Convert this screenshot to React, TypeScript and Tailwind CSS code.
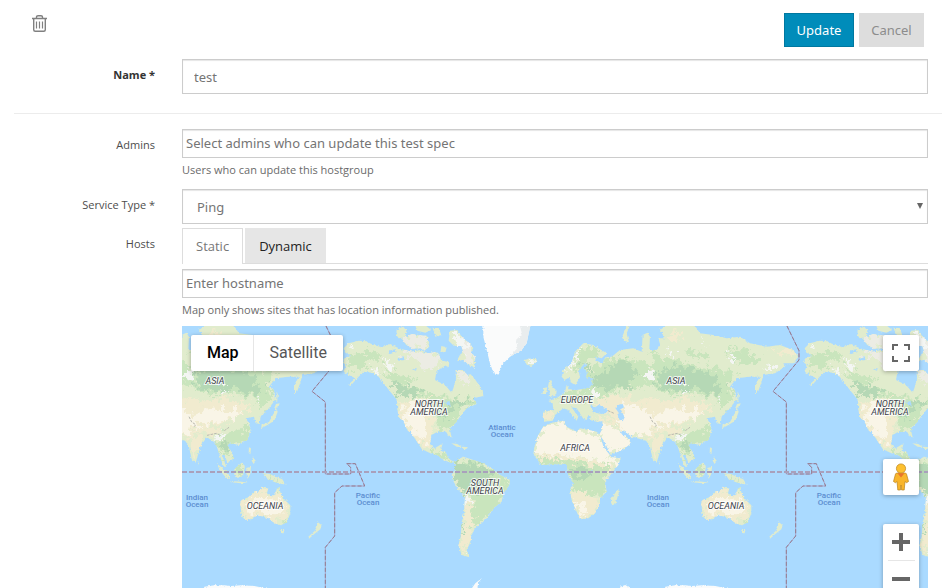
import { useLayoutEffect, useRef, useState, type ReactNode } from "react";

const WORLD_WIDTH = 461;

const LAND = [
  // North and Central America
  "M485 85L500 70L530 62L552 64L575 75L600 82L625 72L650 85L690 95L714 90L740 100L765 95L775 115L790 125L789 138L764 152L759 180L789 195L809 218L814 205L822 180L821 150L844 150L856 165L866 163L879 178L902 212L904 228L874 235L884 252L854 265L834 290L824 305L804 325L806 340L809 352L801 350L792 335L764 337L748 345L744 372L758 385L774 375L782 370L776 392L792 398L798 415L814 425L810 430L785 420L765 405L745 400L720 388L708 370L695 350L685 332L678 334L665 305L650 290L645 260L645 240L625 215L605 190L590 170L570 158L545 155L530 170L505 198L499 194L520 175L500 165L485 155L492 135L480 125L490 112L510 108L490 98Z",
  // South America
  "M814 425L844 410L874 420L904 430L929 445L954 465L984 480L982 495L964 520L959 545L934 565L919 590L899 610L879 625L869 645L864 670L854 690L862 712L839 705L829 675L836 650L839 610L847 570L849 530L829 510L812 480L809 465L819 450L819 435Z",
  // Africa
  "M1084 320L1109 308L1144 302L1154 320L1184 335L1194 325L1244 335L1254 345L1264 380L1279 400L1289 412L1316 415L1309 435L1269 485L1274 515L1254 535L1254 550L1239 580L1219 595L1194 598L1184 575L1169 540L1164 510L1174 490L1159 465L1154 435L1114 432L1079 435L1059 410L1054 400L1059 375L1069 345Z",
  "M1300 518L1309 506L1310 520L1300 553L1289 556L1286 538Z",
  // Eurasia
  "M1086 305L1084 275L1114 270L1112 250L1099 243L1124 235L1149 215L1154 195L1162 208L1184 210L1214 205L1234 195L1228 184L1240 176L1212 172L1216 158L1208 145L1216 132L1206 130L1190 152L1194 172L1180 195L1168 188L1162 172L1148 180L1139 170L1144 150L1169 130L1179 95L1204 70L1234 75L1274 100L1259 115L1244 110L1240 122L1262 128L1270 112L1289 110L1314 90L1354 85L1379 95L1382 45L1396 38L1404 50L1402 90L1424 90L1434 72L1429 55L1450 55L1434 30L1464 10L1534 10L1554 40L1594 45L1634 55L1674 50L1704 70L1754 80L1794 75L1834 90L1849 110L1834 130L1804 130L1809 140L1779 160L1744 165L1739 185L1729 213L1719 220L1719 195L1734 170L1704 170L1664 175L1644 200L1659 210L1662 240L1644 265L1629 275L1619 290L1616 312L1604 310L1599 290L1574 295L1584 310L1589 330L1579 360L1554 375L1529 370L1519 375L1534 400L1539 415L1519 428L1511 405L1503 405L1516 440L1508 440L1494 400L1484 370L1458 352L1440 375L1424 428L1412 418L1403 376L1392 362L1350 350L1322 330L1316 335L1334 350L1349 368L1324 388L1286 405L1268 365L1252 344L1259 330L1262 303L1244 305L1224 300L1226 290L1219 285L1214 300L1204 296L1184 265L1169 262L1189 290L1184 302L1159 270L1144 265L1119 285L1112 302Z",
  // Britain and Ireland
  "M1102 180L1110 182L1108 196L1124 212L1122 226L1100 232L1104 215L1098 200Z M1086 204L1096 202L1092 222L1081 222Z",
  // Iceland
  "M1028 120L1040 116L1062 114L1066 126L1048 138L1034 134Z",
  // Canadian Arctic islands
  "M644 28L664 20L676 35L668 52L650 55L643 45Z M660 55L690 42L710 45L735 48L742 70L725 85L695 86L672 74Z M714 60L730 55L742 80L728 92L716 85Z M698 12L725 12L748 30L730 38L706 32Z M752 24L770 24L778 45L760 50Z M778 78L794 82L790 98L776 94Z",
  "M804 32L826 30L840 52L862 70L874 84L867 96L880 112L878 144L862 136L844 120L824 124L834 104L844 96L838 78L816 78L800 62Z M788 124L802 126L800 142L788 136Z",
  // Novaya Zemlya
  "M1326 62L1320 52L1334 18L1344 16L1334 40L1340 66Z",
  // Japan
  "M1665 252L1676 250L1672 262L1660 264Z M1664 262L1670 275L1660 302L1634 318L1620 325L1622 315L1644 306L1656 284Z M1667 215L1671 222L1668 248L1664 240Z",
  // Taiwan and the Philippines
  "M1584 382L1590 385L1588 403L1583 398Z M1596 412L1604 422L1598 432L1592 422Z",
  // Indonesia
  "M1488 432L1500 440L1528 468L1526 478L1514 472L1496 450Z M1540 448L1562 428L1572 438L1566 468L1550 474L1540 464Z M1576 444L1590 440L1588 462L1580 476L1576 462Z M1528 483L1562 485L1580 488L1560 490L1530 487Z",
  "M1624 458L1646 462L1668 472L1684 478L1694 494L1674 490L1660 486L1644 478L1630 468Z",
  // Australia and New Zealand
  "M1558 550L1562 540L1582 532L1600 514L1612 516L1624 502L1642 506L1638 520L1654 530L1664 516L1670 500L1676 508L1680 524L1692 540L1708 556L1708 580L1698 606L1680 616L1660 610L1642 594L1610 586L1588 598L1572 600L1562 588Z",
  "M1678 630L1690 630L1688 640L1680 640Z M1790 606L1802 616L1798 628L1780 642L1764 656L1762 650L1780 634L1786 624Z",
  // Caribbean
  "M808 370L826 372L840 382L824 380Z M842 380L858 382L852 388L842 386Z",
  // Sri Lanka
  "M1428 424L1434 430L1430 436Z",
];

const PALE = [
  "M1066 345L1084 322L1144 304L1184 338L1244 338L1262 380L1286 412L1316 416L1290 440L1264 425L1200 412L1130 408L1056 400Z",
  "M1252 344L1268 365L1286 405L1352 368L1322 332L1300 325L1262 305Z",
  "M1320 256L1370 258L1400 282L1436 304L1402 345L1350 350L1322 330L1310 310Z",
  "M1400 290L1450 268L1510 270L1550 270L1570 268L1550 290L1510 306L1440 312Z",
  "M670 256L704 250L720 290L732 330L734 370L712 360L686 332L660 290Z",
  "M1574 550L1610 530L1660 540L1690 566L1670 586L1640 584L1610 578L1580 582Z",
  "M1176 545L1204 542L1214 566L1200 590L1186 572Z",
];

const SAND = [
  "M1250 238L1300 226L1340 234L1400 250L1384 232L1450 244L1500 232L1560 246L1594 252L1570 280L1510 312L1440 322L1400 312L1360 340L1310 330L1290 286L1240 264Z",
  "M1380 300L1440 322L1510 326L1470 344L1420 330L1402 360L1376 344Z",
  "M1086 274L1114 272L1114 296L1088 302Z M1226 288L1300 300L1290 318L1262 304Z",
  "M1062 402L1150 410L1200 414L1270 430L1250 440L1180 424L1068 414Z",
  "M1166 512L1210 516L1250 540L1252 560L1230 586L1200 598L1184 580L1170 542Z",
  "M850 530L866 540L870 610L872 640L854 690L842 684L842 640L846 600Z M812 480L840 508L846 530L828 512Z",
  "M656 246L700 240L740 236L752 290L756 330L744 384L712 374L676 340L648 290Z",
  "M1406 346L1436 346L1446 360L1420 412L1408 390Z",
  "M1556 540L1600 516L1640 500L1640 522L1664 520L1676 520L1706 562L1700 596L1664 604L1610 590L1572 602Z",
  "M1460 40L1490 30L1500 60L1474 70Z M1760 88L1830 90L1846 110L1804 102Z M1274 480L1296 440L1310 420L1280 430Z",
];

const GREEN = [
  "M620 168L680 196L740 220L790 232L830 236L874 236L884 252L840 270L806 322L770 332L756 280L740 236L690 220L650 216Z",
  "M500 110L560 90L600 104L590 126L560 122L540 146L500 146Z M600 150L640 160L700 176L690 190L640 184Z",
  "M1206 168L1224 150L1290 112L1340 116L1400 130L1420 190L1350 206L1310 210L1250 236L1200 240L1160 250L1120 246L1150 216L1200 208Z",
  "M1410 106L1470 118L1540 136L1600 146L1660 164L1640 200L1656 240L1614 280L1600 230L1540 224L1470 226L1420 200Z",
  "M1480 350L1540 330L1588 318L1586 346L1560 372L1528 376L1536 412L1516 400L1500 408L1488 380Z",
  "M1060 412L1150 418L1250 428L1296 420L1270 470L1268 530L1240 520L1180 512L1166 480L1154 440L1080 436Z",
  "M820 430L880 420L984 482L960 540L926 580L900 606L874 622L866 570L880 540L850 530L818 492Z",
  "M1200 80L1230 80L1250 100L1220 120L1190 144L1170 160Z",
  "M1660 80L1700 100L1740 116L1720 136L1660 130L1630 100Z M1400 100L1420 60L1424 100Z M1520 90L1570 104L1560 120L1510 104Z",
  "M1290 270L1310 274L1300 290Z M724 384L750 392L790 400L812 430L770 410Z",
  "M1690 590L1704 580L1700 606L1682 614Z M1490 436L1526 474L1500 454Z M1546 436L1566 430L1562 468L1544 462Z M1630 462L1690 488L1660 484Z M1624 502L1638 510L1610 518Z M1670 500L1690 540L1672 524Z",
];

const FOREST = [
  "M1224 186L1246 160L1280 150L1300 128L1330 118L1352 138L1372 150L1370 166L1346 180L1350 206L1330 210L1310 198L1280 208L1250 204L1228 198Z",
  "M1424 164L1470 138L1520 144L1560 156L1610 172L1604 190L1630 214L1600 226L1560 214L1530 196L1490 220L1440 204L1420 192Z",
  "M628 186L690 200L720 220L700 236L660 220L646 232Z",
  "M796 240L830 236L868 240L846 258L816 262L790 300L776 282L806 256Z",
  "M826 430L900 432L930 462L920 500L880 512L850 524L824 500L812 470Z",
  "M1160 442L1210 440L1234 458L1220 476L1176 474Z",
  "M1200 130L1226 134L1220 150L1200 150Z M1500 360L1526 366L1528 384L1506 396Z",
  "M838 622L846 622L844 646L838 658Z M1668 174L1644 196L1656 206L1640 190Z",
];

const TUNDRA = [
  "M714 92L764 100L774 118L760 154L730 146L700 118L660 106L690 96Z",
  "M650 56L700 44L740 50L738 80L690 84Z M804 34L840 52L874 84L880 140L850 120L836 80Z",
  "M824 150L850 160L870 180L850 190L830 180Z",
];

const SNOW = [
  "M600 120L630 126L638 148L616 142Z M1146 160L1184 96L1204 74L1186 110L1166 150Z",
  "M1380 158L1410 150L1424 164L1396 176Z M1640 96L1664 114L1656 124L1636 112Z M1740 146L1780 134L1790 140L1760 154Z",
  "M1220 216L1240 208L1250 230L1230 238Z M1500 208L1518 212L1530 200L1532 214L1508 224Z",
  "M838 530L864 538L856 560L848 560Z M1040 118L1060 118L1056 130L1040 132Z M830 676L838 696L850 710L834 702Z",
  "M806 34L824 36L850 72L862 88L852 96L842 84L820 60Z M500 76L520 72L510 84Z M560 140L590 148L600 164L580 156Z",
  "M1450 96L1474 92L1480 104L1460 106Z M1560 60L1576 66L1570 80Z M1604 230L1620 240L1610 250Z M1476 352L1500 344L1510 352L1490 358Z",
];

const ICE = [
  "M904 10L1046 10L1040 40L1034 70L1019 90L984 110L959 135L950 164L934 158L924 130L914 90L904 50Z",
  "M1450 800L1480 796L1510 796L1530 798L1560 796L1600 798L1640 806L1640 840L1440 840Z M866 810L880 790L900 774L890 786L880 830Z M1314 800L1330 795L1344 804L1340 830L1320 830Z",
];

const WATER = [
  "M1228 256L1240 262L1250 254L1274 266L1276 278L1258 282L1232 276Z",
  "M1306 256L1322 252L1326 262L1316 268L1328 292L1322 304L1308 296L1310 278L1300 264Z",
  "M620 92L640 88L644 96L624 102Z M646 118L664 112L668 120L650 122Z M690 148L704 144L702 152Z",
  "M784 246L802 244L806 258L794 252Z M1312 332L1330 344L1324 348Z",
  "M1490 192L1508 178L1510 184L1492 198Z M1226 452L1232 450L1234 460L1228 460Z",
];

const DATELINE =
  "M432 18L468 92V120L390 214L430 246V462H506V442L494 431H520L548 498H480L458 518V648L430 682V860";

const RANGES = "M1404 290L1412 306L1424 314L1420 320M1458 346L1486 340L1498 346M1510 332L1524 322M1278 272L1296 280";

function Shapes({ paths, fill }: { paths: string[]; fill: string }) {
  return (
    <g fill={fill}>
      {paths.map((d) => (
        <path key={d} d={d} />
      ))}
    </g>
  );
}

function World() {
  return (
    <>
      <g filter="url(#coast)">
        <Shapes paths={LAND} fill="#e1eccd" />
        <g clipPath="url(#land)">
          <g filter="url(#terrain)">
            <Shapes paths={GREEN} fill="#c9e5bd" />
            <Shapes paths={SAND} fill="#f1ebcf" />
            <Shapes paths={PALE} fill="#f9f5e7" />
            <Shapes paths={FOREST} fill="#b5d8b5" />
            <Shapes paths={TUNDRA} fill="#ecece4" />
            <Shapes paths={SNOW} fill="#f4f6f3" />
          </g>
        </g>
        <Shapes paths={ICE} fill="#fafbfb" />
        <path d="M1014 18H1046L1040 40L1034 70L1019 90L984 110L1006 84L1002 60L1020 42Z" fill="#e9edee" />
        <Shapes paths={WATER} fill="#aadaff" />
      </g>
      <path d={RANGES} fill="none" stroke="#b9b9b0" strokeWidth="3" strokeDasharray="8 3" />
      <path d={DATELINE} fill="none" stroke="#a8a4cc" strokeWidth="3" />
      <path d={DATELINE} fill="none" stroke="#957c8f" strokeWidth="3" strokeDasharray="12 6" />
    </>
  );
}

type Place = { lines: string[]; x: number; y: number; ocean?: boolean };

const PLACES: Place[] = [
  { lines: ["ASIA"], x: 494, y: 58 },
  { lines: ["NORTH", "AMERICA"], x: 247, y: 81 },
  { lines: ["EUROPE"], x: 395, y: 77 },
  { lines: ["AFRICA"], x: 393, y: 125 },
  { lines: ["SOUTH", "AMERICA"], x: 303, y: 160 },
  { lines: ["OCEANIA"], x: 544, y: 183 },
  { lines: ["Atlantic", "Ocean"], x: 320, y: 104, ocean: true },
  { lines: ["Pacific", "Ocean"], x: 186, y: 172, ocean: true },
  { lines: ["Indian", "Ocean"], x: 476, y: 174, ocean: true },
];

function PlaceLabel({ place, offset }: { place: Place; offset: number }) {
  return (
    <text
      textAnchor="middle"
      className={
        place.ocean
          ? "fill-[#5b8dd0] text-[8px] font-medium"
          : "fill-[#40424a] stroke-[#ffffffcc] stroke-2 text-[9px] italic [paint-order:stroke]"
      }
    >
      {place.lines.map((line, i) => (
        <tspan key={line} x={place.x + offset} y={place.y + i * (place.ocean ? 7 : 8)}>
          {line}
        </tspan>
      ))}
    </text>
  );
}

function WorldMap() {
  const ref = useRef<SVGSVGElement>(null);
  const [width, setWidth] = useState(0);

  useLayoutEffect(() => {
    const svg = ref.current;
    if (!svg) return;
    const measure = () => setWidth(svg.getBoundingClientRect().width);
    measure();
    const observer = new ResizeObserver(measure);
    observer.observe(svg);
    return () => observer.disconnect();
  }, []);

  // The world repeats sideways until the map's whole width is covered.
  const offsets: number[] = [];
  for (let x = -WORLD_WIDTH; x < width - 130; x += WORLD_WIDTH) offsets.push(x);

  return (
    <svg ref={ref} className="block h-full w-full font-['Roboto',sans-serif]" role="img" aria-label="World map">
      <defs>
        <filter id="coast" x="-2%" y="-2%" width="104%" height="104%">
          <feTurbulence type="fractalNoise" baseFrequency="0.16" numOctaves="3" seed="4" result="noise" />
          <feDisplacementMap in="SourceGraphic" in2="noise" scale="9" xChannelSelector="R" yChannelSelector="G" />
        </filter>
        <filter id="terrain" x="-2%" y="-2%" width="104%" height="104%">
          <feTurbulence type="fractalNoise" baseFrequency="0.06" numOctaves="4" seed="9" result="noise" />
          <feDisplacementMap in="SourceGraphic" in2="noise" scale="55" xChannelSelector="R" yChannelSelector="G" />
        </filter>
        <clipPath id="land">
          {LAND.map((d) => (
            <path key={d} d={d} />
          ))}
        </clipPath>
      </defs>
      {offsets.map((offset) => (
        <g key={offset} transform={`translate(${offset} -6) scale(0.33333)`}>
          <World />
        </g>
      ))}
      <line x1="0" x2="100%" y1="146" y2="146" stroke="#a9a0bc" strokeWidth="2" strokeDasharray="5 2" />
      {offsets.flatMap((offset) =>
        PLACES.filter((p) => p.x + offset > 0 && p.x + offset < width).map((p) => (
          <PlaceLabel key={`${p.lines[0]} ${offset}`} place={p} offset={offset} />
        )),
      )}
    </svg>
  );
}

function Pegman() {
  return (
    <svg viewBox="0 0 18 28" className="h-7 w-[18px]" aria-hidden="true">
      <g stroke="#b9821c" strokeWidth="0.7">
        <path
          d="M4.500 10h9l1 1 2 7.500-2 1.200-1.500-1.200-.8 8.500H9.600L9 22l-.6 5H5.800L5 18.500l-1.500 1.200-2-1.200 2-7.500z"
          fill="#f9b52b"
        />
        <circle cx="9" cy="5.500" r="4.600" fill="#fdc02f" />
      </g>
      <path d="M5.500 10.200h7L9 14.500z" fill="#e8742c" />
    </svg>
  );
}

function Row({ label, htmlFor, bold, children }: { label: string; htmlFor: string; bold?: boolean; children: ReactNode }) {
  return (
    <div className="flex pr-5">
      <label
        htmlFor={htmlFor}
        className={`mr-[27px] w-[155px] shrink-0 pt-2 text-right text-[11px] leading-4 ${bold ? "font-bold text-[#333]" : "text-[#4d4d4d]"}`}
      >
        {label}
      </label>
      <div className="min-w-0 flex-1">{children}</div>
    </div>
  );
}

const control = "font-['Noto_Sans',sans-serif]";
const field =
  "block w-full border border-[#ccc] bg-white text-[#757575] shadow-[inset_0_1px_1px_rgba(0,0,0,0.1)] outline-none placeholder:text-[#757575] placeholder:opacity-100";
const picker = "h-[29px] px-[3px] pb-[2px]";
const mapButton = "flex w-9 items-center justify-center rounded-xs bg-white shadow-[0_1px_4px_rgba(0,0,0,0.3)]";

export default function App() {
  const [name, setName] = useState("test");
  return (
    <div className="h-screen overflow-hidden bg-white font-['Open_Sans','Noto_Sans',sans-serif] text-[13px]">
      <header className="flex items-start justify-between pt-[13px] pr-6 pl-8">
        <button type="button" aria-label="Delete" className="mt-[2px] text-[#808080]">
          <svg viewBox="0 0 15 17" className="h-[17px] w-[15px]" fill="none" stroke="currentColor" aria-hidden="true">
            <path d="M0 3.500h15M4.500 3V2q0-1.300 1.500-1.300h3q1.500 0 1.500 1.300v1M1.700 4v10.700q0 1.500 1.500 1.500h8.600q1.500 0 1.500-1.500V4" strokeWidth="1.400" />
            <path d="M4.500 6.500v7M7.500 6.500v7M10.500 6.500v7" strokeWidth="1.200" />
          </svg>
        </button>
        <div className="flex gap-[5px]">
          <button type="button" className={`${control} h-[34px] w-[70px] bg-[#008cba] pt-px text-white inset-ring inset-ring-[#0078a0]`}>
            Update
          </button>
          <button type="button" className={`${control} h-[34px] w-[65px] bg-[#ddd] pt-px text-[#8c8c8c]`}>
            Cancel
          </button>
        </div>
      </header>

      <form className="mt-3" onSubmit={(e) => e.preventDefault()}>
        <Row label="Name *" htmlFor="name" bold>
          <input id="name" value={name} onChange={(e) => setName(e.target.value)} className={`${field} ${control} h-[35px] px-[11px]`} />
        </Row>

        <hr className="mt-[19px] mr-[6px] mb-[15px] ml-[14px] border-[#ececec]" />

        <Row label="Admins" htmlFor="admins">
          <input id="admins" placeholder="Select admins who can update this test spec" className={`${field} ${control} ${picker}`} />
          <p className="mt-1 mb-[11px] text-[11px] leading-4 text-[#6b6b6b]">Users who can update this hostgroup</p>
        </Row>

        <Row label="Service Type *" htmlFor="service">
          <div className="relative mb-1">
            <select id="service" className={`${field} ${control} h-[35px] appearance-none px-[14px] pt-[2px]`}>
              <option>Ping</option>
            </select>
            <svg viewBox="0 0 6 6" className="pointer-events-none absolute top-[14px] right-[5px] size-[6px]" aria-hidden="true">
              <path d="M0 0h6L3 6z" fill="#666" />
            </svg>
          </div>
        </Row>

        <Row label="Hosts" htmlFor="host">
          <div role="tablist" className="flex h-9 items-stretch gap-[2px] border-b border-[#ddd]">
            <button type="button" role="tab" aria-selected="true" className="-mb-px border border-b-0 border-[#ddd] bg-white px-[13px] text-[#777]">
              Static
            </button>
            <button type="button" role="tab" aria-selected="false" className="bg-[#e6e6e6] px-[14px] pt-[2px] text-[#222]">
              Dynamic
            </button>
          </div>
          <input id="host" placeholder="Enter hostname" className={`${field} ${control} ${picker} mt-[5px]`} />
          <p className="mt-1 mb-2 text-[11px] leading-4 text-[#6b6b6b]">
            Map only shows sites that has location information published.
          </p>

          <div className="relative h-[400px] overflow-hidden bg-[#aadaff]">
            <WorldMap />
            <div className="absolute top-[9px] left-[9px] flex h-9 rounded-xs bg-white font-['Roboto',sans-serif] text-base shadow-[0_1px_4px_rgba(0,0,0,0.3)]">
              <button type="button" className="border-r border-[#e6e6e6] pr-[14px] pl-4 font-medium text-black">
                Map
              </button>
              <button type="button" className="px-4 text-[#565656]">
                Satellite
              </button>
            </div>
            <button type="button" aria-label="Toggle fullscreen" className={`${mapButton} absolute top-[9px] right-[9px] h-9`}>
              <svg viewBox="0 0 18 18" className="size-[18px]" fill="none" stroke="#666" strokeWidth="2" aria-hidden="true">
                <path d="M1 6V1h5M12 1h5v5M17 12v5h-5M6 17H1v-5" />
              </svg>
            </button>
            <div className="absolute top-[133px] right-[9px] flex flex-col gap-[29px]">
              <button type="button" aria-label="Street view" className={`${mapButton} h-9`}>
                <Pegman />
              </button>
              <div className={`${mapButton} flex-col`}>
                <button type="button" aria-label="Zoom in" className="flex h-9 w-9 items-center justify-center">
                  <svg viewBox="0 0 18 18" className="size-[18px]" aria-hidden="true">
                    <path d="M7 0h4v7h7v4h-7v7H7v-7H0V7h7z" fill="#666" />
                  </svg>
                </button>
                <div className="h-px w-[27px] bg-[#e6e6e6]" />
                <button type="button" aria-label="Zoom out" className="flex h-9 w-9 items-center justify-center">
                  <svg viewBox="0 0 18 18" className="size-[18px]" aria-hidden="true">
                    <path d="M0 7h18v4H0z" fill="#666" />
                  </svg>
                </button>
              </div>
            </div>
          </div>
        </Row>
      </form>
    </div>
  );
}
